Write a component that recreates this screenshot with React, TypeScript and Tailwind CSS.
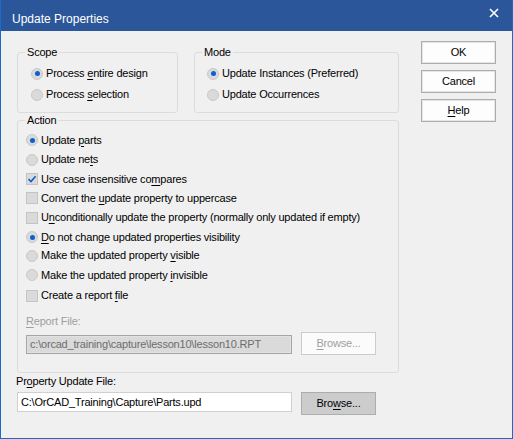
import React from "react";

const font = { fontFamily: '"Liberation Sans", Arial, sans-serif' };

// Text with one underlined access-key letter
const Key = ({ before, k, after }: { before?: string; k: string; after?: string }) => (
  <span>
    {before}
    <span className="underline underline-offset-[2px]">{k}</span>
    {after}
  </span>
);

const Radio = ({ checked }: { checked?: boolean }) => (
  <span className="flex h-[12px] w-[12px] shrink-0 items-center justify-center rounded-full border border-[#c9c9c9] bg-[#dadada]">
    {checked && <span className="h-[5px] w-[5px] rounded-full bg-[#0d5fd0]" />}
  </span>
);

const Check = ({ checked }: { checked?: boolean }) => (
  <span className="flex h-[12px] w-[12px] shrink-0 items-center justify-center border border-[#c4c4c4] bg-[#dadada]">
    {checked && (
      <svg width="10" height="10" viewBox="0 0 10 10">
        <path d="M1.5 5.2 L4 7.6 L8.6 2.2" fill="none" stroke="#0d5fd0" strokeWidth="1.6" />
      </svg>
    )}
  </span>
);

const Row = ({ h, children }: { h: string; children: React.ReactNode }) => (
  <div className={`flex items-center gap-[3px] ${h}`}>{children}</div>
);

const Button = ({ children }: { children: React.ReactNode }) => (
  <div className="flex h-[23px] w-[75px] items-center justify-center border border-[#adadad] bg-[#fdfdfd] shadow-[inset_0_0_0_1px_#e5e5e5]">
    {children}
  </div>
);

export default function App() {
  return (
    <div
      style={font}
      className="flex h-[439px] w-[513px] flex-col border border-t-0 border-[#1a6cc9] bg-[#f0f0f0] text-[11px] tracking-[-0.2px] text-black"
    >
      <div className="flex h-[31px] shrink-0 items-center justify-between bg-[#2b579a] pl-[11px] pr-[13px] text-[12px] text-white">
        <span className="mt-[6px] tracking-normal">Update Properties</span>
        <svg width="10" height="10" viewBox="0 0 10 10" className="-mt-[6px]">
          <path d="M1 1 L9 9 M9 1 L1 9" stroke="white" strokeWidth="1.6" />
        </svg>
      </div>

      <div className="flex pl-[16px]">
        <div className="flex w-[382px] flex-col pt-[14px]">
          <div className="flex gap-[16px]">
            <fieldset className="w-[161px] rounded-[3px] border border-[#dcdcdc] pb-[7px] pl-[13px]">
              <legend className="-ml-[6px] px-[2px] leading-[15px]">Scope</legend>
              <div className="pt-[3px]">
                <Row h="h-[21px]">
                  <Radio checked />
                  <Key before="Process " k="e" after="ntire design" />
                </Row>
                <Row h="h-[21px]">
                  <Radio />
                  <Key before="Process " k="s" after="election" />
                </Row>
              </div>
            </fieldset>
            <fieldset className="w-[205px] rounded-[3px] border border-[#dcdcdc] pb-[7px] pl-[12px]">
              <legend className="-ml-[5px] px-[2px] leading-[15px]">Mode</legend>
              <div className="pt-[3px]">
                <Row h="h-[21px]">
                  <Radio checked />
                  <span>Update Instances (Preferred)</span>
                </Row>
                <Row h="h-[21px]">
                  <Radio />
                  <span>Update Occurrences</span>
                </Row>
              </div>
            </fieldset>
          </div>

          <fieldset className="rounded-[3px] border border-[#dcdcdc] pb-[18px] pl-[8px]">
            <legend className="-ml-[1px] px-[2px] leading-[15px]">Action</legend>
            <div className="pt-[2px]">
              <Row h="h-[20px]">
                <Radio checked />
                <Key before="Update " k="p" after="arts" />
              </Row>
              <Row h="h-[19px]">
                <Radio />
                <Key before="Update ne" k="t" after="s" />
              </Row>
              <Row h="h-[20px]">
                <Check checked />
                <Key before="Use case insensitive co" k="m" after="pares" />
              </Row>
              <Row h="h-[18px]">
                <Check />
                <Key before="Convert the " k="u" after="pdate property to uppercase" />
              </Row>
              <Row h="h-[21px]">
                <Check />
                <Key before="U" k="n" after="conditionally update the property (normally only updated if empty)" />
              </Row>
              <Row h="h-[18px]">
                <Radio checked />
                <Key k="D" after="o not change updated properties visibility" />
              </Row>
              <Row h="h-[19px]">
                <Radio />
                <Key before="Make the updated property " k="v" after="isible" />
              </Row>
              <Row h="h-[20px]">
                <Radio />
                <Key before="Make the updated property " k="i" after="nvisible" />
              </Row>
              <Row h="h-[21px]">
                <Check />
                <Key before="Create a report " k="f" after="ile" />
              </Row>
            </div>

            <div className="mt-[7px] flex h-[16px] items-center text-[#a0a0a0]">
              <Key k="R" after="eport File:" />
            </div>
            <div className="mt-[3px] flex items-end gap-[9px]">
              <div className="flex h-[19px] w-[266px] items-center border border-[#a5a5a5] bg-[#dadada] px-[3px] text-[#6d6d6d] shadow-[inset_0_0_0_1px_#e2e2e2]">
                c:\orcad_training\capture\lesson10\lesson10.RPT
              </div>
              <div className="mb-[-1px] flex h-[23px] w-[75px] items-center justify-center border border-[#cccccc] bg-[#fbfbfb] text-[#a0a0a0]">
                <Key k="B" after="rowse..." />
              </div>
            </div>
          </fieldset>

          <div className="-ml-[1px] flex h-[16px] items-center">
            <Key before="Pr" k="o" after="perty Update File:" />
          </div>
          <div className="mt-[3px] flex items-start gap-[9px]">
            <div className="flex h-[20px] w-[275px] items-center border border-[#d0d0d0] bg-white px-[3px]">
              C:\OrCAD_Training\Capture\Parts.upd
            </div>
            <div className="flex h-[23px] w-[75px] items-center justify-center border border-[#adadad] bg-[#cccccc]">
              <Key before="Bro" k="w" after="se..." />
            </div>
          </div>
        </div>

        <div className="ml-[22px] flex flex-col gap-[6px] pt-[10px]">
          <Button>OK</Button>
          <Button>Cancel</Button>
          <Button>
            <Key k="H" after="elp" />
          </Button>
        </div>
      </div>
    </div>
  );
}
